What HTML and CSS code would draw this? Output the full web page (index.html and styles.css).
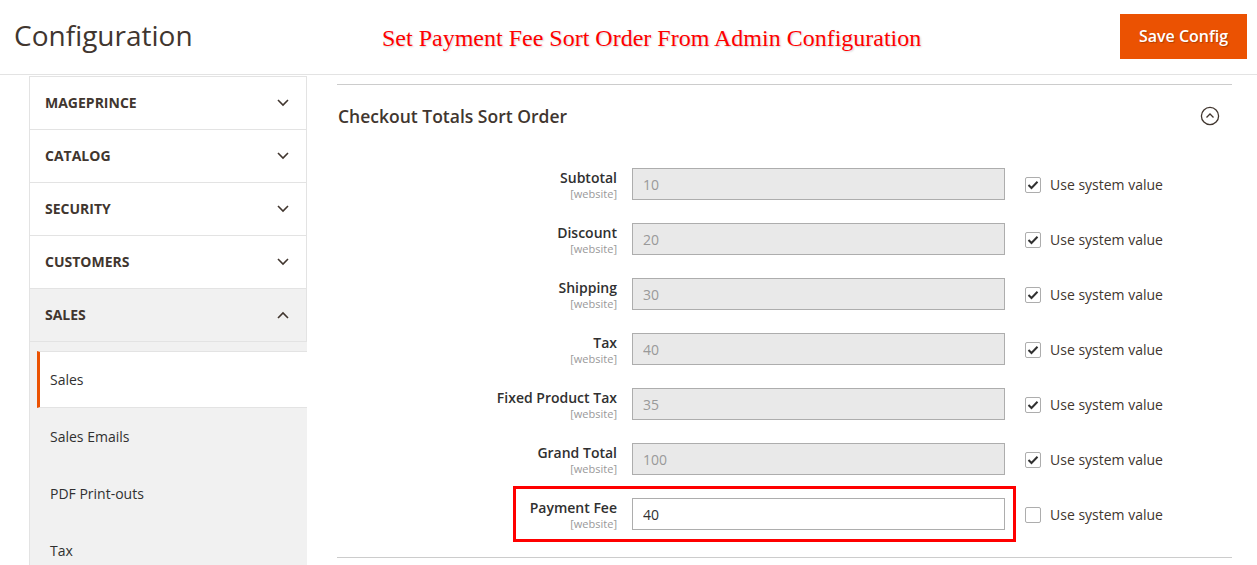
FILE: index.html
```html
<!DOCTYPE html>
<html>
<head>
<meta charset="utf-8">
<link rel="stylesheet" href="styles.css">
</head>
<body>
<header class="page-header">
  <h1 class="page-title">Configuration</h1>
  <div class="promo">Set Payment Fee Sort Order From Admin Configuration</div>
  <button class="save-btn">Save Config</button>
</header>
<div class="page-main">
  <nav class="side-nav">
    <div class="nav-group"><span>MAGEPRINCE</span><svg class="chev" width="12" height="8" viewBox="0 0 12 8"><polyline points="1,1 6,6 11,1"/></svg></div>
    <div class="nav-group"><span>CATALOG</span><svg class="chev" width="12" height="8" viewBox="0 0 12 8"><polyline points="1,1 6,6 11,1"/></svg></div>
    <div class="nav-group"><span>SECURITY</span><svg class="chev" width="12" height="8" viewBox="0 0 12 8"><polyline points="1,1 6,6 11,1"/></svg></div>
    <div class="nav-group"><span>CUSTOMERS</span><svg class="chev" width="12" height="8" viewBox="0 0 12 8"><polyline points="1,1 6,6 11,1"/></svg></div>
    <div class="nav-group open"><span>SALES</span><svg class="chev" width="12" height="8" viewBox="0 0 12 8"><polyline points="1,7 6,2 11,7"/></svg></div>
    <ul class="nav-items">
      <li class="nav-item active">Sales</li>
      <li class="nav-item">Sales Emails</li>
      <li class="nav-item">PDF Print-outs</li>
      <li class="nav-item">Tax</li>
    </ul>
  </nav>
  <main class="content">
    <section class="section">
      <div class="section-head">
        <h2 class="section-title">Checkout Totals Sort Order</h2>
        <svg class="collapse" width="20" height="20" viewBox="0 0 20 20"><circle cx="10" cy="10" r="8.6"/><polyline points="6.5,11.5 10,8 13.5,11.5"/></svg>
      </div>
      <div class="fields">
        <div class="field">
          <div class="label"><span class="lbl">Subtotal</span><span class="scope">[website]</span></div>
          <input class="inp" type="text" value="10" disabled>
          <label class="sys"><span class="cb checked"><svg width="12" height="10" viewBox="0 0 12 10"><polyline points="1.5,5 4.5,8 10.5,1.8"/></svg></span>Use system value</label>
        </div>
        <div class="field">
          <div class="label"><span class="lbl">Discount</span><span class="scope">[website]</span></div>
          <input class="inp" type="text" value="20" disabled>
          <label class="sys"><span class="cb checked"><svg width="12" height="10" viewBox="0 0 12 10"><polyline points="1.5,5 4.5,8 10.5,1.8"/></svg></span>Use system value</label>
        </div>
        <div class="field">
          <div class="label"><span class="lbl">Shipping</span><span class="scope">[website]</span></div>
          <input class="inp" type="text" value="30" disabled>
          <label class="sys"><span class="cb checked"><svg width="12" height="10" viewBox="0 0 12 10"><polyline points="1.5,5 4.5,8 10.5,1.8"/></svg></span>Use system value</label>
        </div>
        <div class="field">
          <div class="label"><span class="lbl">Tax</span><span class="scope">[website]</span></div>
          <input class="inp" type="text" value="40" disabled>
          <label class="sys"><span class="cb checked"><svg width="12" height="10" viewBox="0 0 12 10"><polyline points="1.5,5 4.5,8 10.5,1.8"/></svg></span>Use system value</label>
        </div>
        <div class="field">
          <div class="label"><span class="lbl">Fixed Product Tax</span><span class="scope">[website]</span></div>
          <input class="inp" type="text" value="35" disabled>
          <label class="sys"><span class="cb checked"><svg width="12" height="10" viewBox="0 0 12 10"><polyline points="1.5,5 4.5,8 10.5,1.8"/></svg></span>Use system value</label>
        </div>
        <div class="field">
          <div class="label"><span class="lbl">Grand Total</span><span class="scope">[website]</span></div>
          <input class="inp" type="text" value="100" disabled>
          <label class="sys"><span class="cb checked"><svg width="12" height="10" viewBox="0 0 12 10"><polyline points="1.5,5 4.5,8 10.5,1.8"/></svg></span>Use system value</label>
        </div>
        <div class="field highlighted">
          <span class="highlight"></span>
          <div class="label"><span class="lbl">Payment Fee</span><span class="scope">[website]</span></div>
          <input class="inp active" type="text" value="40">
          <label class="sys"><span class="cb"></span>Use system value</label>
        </div>
      </div>
    </section>
  </main>
</div>
</body>
</html>
```
FILE: styles.css
```css
* { box-sizing: border-box; }
html, body { margin: 0; padding: 0; background: #fff; }
body {
  font-family: "Open Sans", "Noto Sans", sans-serif;
  color: #41362f;
  width: 1257px;
  height: 565px;
  overflow: hidden;
}

.page-header {
  height: 75px;
  border-bottom: 1px solid #e3e3e3;
  display: flex;
  align-items: center;
  padding: 0 10px 0 14px;
}
.page-title {
  margin: 0;
  font-size: 28px;
  font-weight: 400;
  color: #41362f;
  width: 368px;
  position: relative;
  top: -2px;
}
.promo {
  font-family: "Liberation Serif", serif;
  color: #ff0000;
  font-size: 24px;
  text-shadow: 1px 1px 2px rgba(0,0,0,0.18);
  flex: 1;
  position: relative;
  top: 1px;
}
.save-btn {
  background: #eb5202;
  border: 1px solid #eb5202;
  color: #fff;
  font-family: "Open Sans", sans-serif;
  font-weight: 600;
  font-size: 16px;
  height: 45px;
  width: 127px;
  padding: 0;
  text-shadow: 1px 1px 1px rgba(0,0,0,0.25);
  position: relative;
  top: -1px;
}

.page-main {
  display: flex;
  align-items: flex-start;
}

.side-nav {
  width: 278px;
  margin-left: 29px;
  margin-top: 1px;
  border: 1px solid #e3e3e3;
  border-bottom: none;
}
.nav-group {
  height: 53px;
  border-bottom: 1px solid #e3e3e3;
  display: flex;
  align-items: center;
  justify-content: space-between;
  padding: 0 17px 2px 15px;
  font-weight: 700;
  font-size: 14px;
  color: #41362f;
}
.nav-group .chev { margin-top: 1px; }
.nav-group.open { background: #f1f1f1; }
.chev polyline {
  fill: none;
  stroke: #41362f;
  stroke-width: 1.6;
}
.nav-items {
  list-style: none;
  margin: 0;
  padding: 9px 0 0;
  background: #f1f1f1;
  margin-right: -1px;
}
.nav-item {
  height: 57px;
  margin-left: 7px;
  padding-left: 10px;
  display: flex;
  align-items: center;
  font-size: 14px;
  color: #303030;
  border-left: 3px solid transparent;
}
.nav-item.active {
  background: #fff;
  border-left-color: #eb5202;
  border-top: 1px solid #e3e3e3;
  border-bottom: 1px solid #e3e3e3;
}

.content {
  width: 895px;
  margin-left: 30px;
  margin-top: 9px;
}
.section {
  border-top: 1px solid #cccccc;
  border-bottom: 1px solid #cccccc;
  padding-bottom: 27px;
}
.section-head {
  display: flex;
  justify-content: space-between;
  padding: 19px 12px 0 1px;
  height: 83px;
  align-items: flex-start;
}
.section-title {
  margin: 0;
  font-size: 17.5px;
  font-weight: 600;
  line-height: 24px;
  color: #41362f;
}
.collapse { margin-top: 2px; }
.collapse circle, .collapse polyline {
  fill: none;
  stroke: #41362f;
  stroke-width: 1.3;
}

.fields {
  display: flex;
  flex-direction: column;
  gap: 23px;
}
.field {
  display: flex;
  align-items: flex-start;
  position: relative;
}
.label {
  width: 280px;
  display: flex;
  flex-direction: column;
  align-items: flex-end;
  padding-top: 1px;
}
.lbl {
  font-size: 14px;
  font-weight: 600;
  line-height: 18px;
  color: #303030;
}
.scope {
  font-size: 11px;
  line-height: 13px;
  color: #999;
}
.inp {
  margin-left: 15px;
  width: 373px;
  height: 32px;
  border: 1px solid #adadad;
  background: #e9e9e9;
  color: #999;
  font-family: "Open Sans", sans-serif;
  font-size: 14px;
  padding: 0 10px;
  opacity: 1;
  outline: none;
}
.inp.active {
  background: #fff;
  color: #303030;
}
.sys {
  display: flex;
  align-items: center;
  margin-left: 20px;
  height: 32px;
  font-size: 14px;
  color: #41362f;
  padding-top: 1px;
}
.cb {
  width: 16px;
  height: 16px;
  border: 1px solid #adadad;
  border-radius: 2px;
  background: #fff;
  margin-right: 9px;
  display: flex;
  align-items: center;
  justify-content: center;
}
.cb polyline {
  fill: none;
  stroke: #303030;
  stroke-width: 2;
}
.highlight {
  position: absolute;
  left: 176px;
  top: -12px;
  width: 503px;
  height: 56px;
  border: 3px solid #ff0000;
  pointer-events: none;
}
```
